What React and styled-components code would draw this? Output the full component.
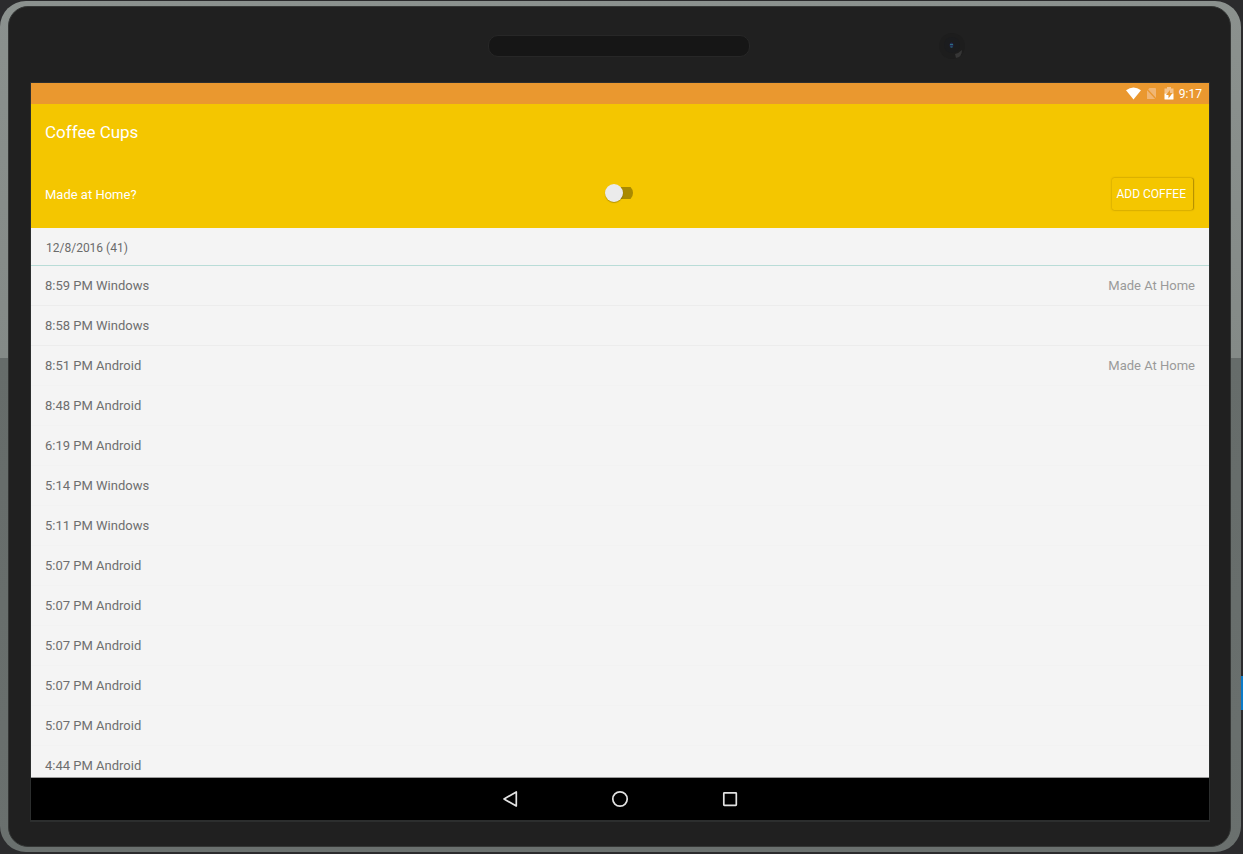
import React from "react";
import styled, { createGlobalStyle } from "styled-components";

const GlobalStyle = createGlobalStyle`
  *, *::before, *::after { box-sizing: border-box; }
  body {
    margin: 0;
    background: #2b2b2d;
    font-family: Roboto, "Liberation Sans", sans-serif;
  }
`;

const Desk = styled.div`
  display: flex;
  height: 100vh;
  padding: 1px 0 2px;
  overflow: hidden;
`;

const Casing = styled.div`
  flex: 1;
  min-width: 0;
  display: flex;
  padding: 5px 10px 5px 8px;
  border-radius: 26px;
  background: linear-gradient(#8b918e 0, #848a87 42%, #666c6a 42%, #6a706e 100%);
`;

const Edge = styled.div`
  flex: none;
  width: 2px;
  display: flex;
  flex-direction: column;
  justify-content: flex-end;
  padding-bottom: 142px;
`;

const EdgeMark = styled.div`
  height: 34px;
  background: #0a7bc9;
`;

const Bezel = styled.div`
  flex: 1;
  min-width: 0;
  display: flex;
  flex-direction: column;
  padding: 0 20px 24px 21px;
  border: 1px solid #343635;
  border-radius: 20px;
  background: #202020;
`;

const BezelTop = styled.div`
  display: grid;
  grid-template-columns: 1fr auto 1fr;
  align-items: center;
  height: 75px;
  padding: 2px 2px 0 0;
`;

const Speaker = styled.div`
  grid-column: 2;
  width: 262px;
  height: 22px;
  border: 1px solid #272727;
  border-radius: 10px;
  background: #161616;
`;

const Camera = styled.svg`
  width: 28px;
  height: 28px;
  margin-left: 188px;
`;

const Screen = styled.main`
  flex: 1;
  min-height: 0;
  display: flex;
  flex-direction: column;
  border: solid #2c2e2e;
  border-width: 1px 1px 2px;
  background: #f4f4f4;
`;

const StatusBar = styled.div`
  flex: none;
  display: flex;
  align-items: center;
  justify-content: flex-end;
  height: 21px;
  padding-right: 7px;
  background: #ea982f;
  color: #fff;
  font-size: 12px;
`;

const StatusIcons = styled.svg`
  width: 48px;
  height: 21px;
  margin-right: 5px;
`;

const AppHeader = styled.header`
  flex: none;
  background: #f4c600;
  color: #fff;
`;

const Title = styled.h1`
  margin: 0;
  padding: 0 14px;
  font-size: 17px;
  line-height: 56px;
  font-weight: 400;
`;

const Controls = styled.div`
  display: grid;
  grid-template-columns: 1fr auto 1fr;
  align-items: center;
  height: 68px;
  padding: 0 16px 0 14px;
`;

const SwitchLabel = styled.label`
  font-size: 13px;
`;

const Switch = styled.input`
  appearance: none;
  display: flex;
  align-items: center;
  width: 28px;
  height: 18px;
  margin: 0 0 2px;
  border-radius: 9px;
  background: linear-gradient(#a98a00, #a98a00) right center / 18px 12px no-repeat;
  &::before {
    content: "";
    width: 18px;
    height: 18px;
    border-radius: 50%;
    background: #ebebeb;
    box-shadow: 0 1px 1px rgba(0, 0, 0, 0.25);
  }
  &:checked { justify-content: flex-end; }
`;

const AddButton = styled.button`
  justify-self: end;
  height: 32px;
  padding: 0 7px 0 4px;
  border: 0;
  border-radius: 2px;
  background: #f4c600;
  box-shadow: 1px 0 1px rgba(110, 85, 0, 0.4), 0 0 2px rgba(110, 85, 0, 0.5);
  color: #fff;
  font-family: inherit;
  font-size: 12px;
  text-transform: uppercase;
`;

const CupLog = styled.section`
  flex: 1;
  min-height: 0;
  overflow: hidden;
  border-bottom: 1px solid #9b9b9b;
`;

const DayHeading = styled.h2`
  margin: 0;
  padding: 3px 15px 0;
  border-bottom: 1px solid #b9dcd7;
  color: #6b6b6b;
  font-size: 12px;
  line-height: 34px;
  font-weight: 400;
`;

const CupList = styled.ul`
  margin: 0;
  padding: 0;
  list-style: none;
`;

const CupRow = styled.li`
  display: flex;
  justify-content: space-between;
  height: 40px;
  padding: 0 14px;
  border-bottom: 1px solid ${({ $faint }) => ($faint ? "#f2f2f2" : "#ececec")};
  color: #6e6e6e;
  font-size: 13px;
  line-height: 40px;
`;

const HomeNote = styled.span`
  color: #9a9a9a;
`;

const NavBar = styled.nav`
  flex: none;
  display: flex;
  align-items: center;
  justify-content: center;
  gap: 86px;
  height: 42px;
  padding-bottom: 1px;
  background: #000;
`;

const NavButton = styled.button`
  display: flex;
  padding: 0;
  border: 0;
  background: none;
  svg { width: 24px; height: 24px; fill: none; stroke: #e2e2e2; stroke-width: 1.7; }
`;

const cups = [
  ["8:59 PM", "Windows", true],
  ["8:58 PM", "Windows"],
  ["8:51 PM", "Android", true],
  ["8:48 PM", "Android"],
  ["6:19 PM", "Android"],
  ["5:14 PM", "Windows"],
  ["5:11 PM", "Windows"],
  ["5:07 PM", "Android"],
  ["5:07 PM", "Android"],
  ["5:07 PM", "Android"],
  ["5:07 PM", "Android"],
  ["5:07 PM", "Android"],
  ["4:44 PM", "Android"],
];

export default function App() {
  return (
    <>
      <GlobalStyle />
      <Desk>
        <Casing>
          <Bezel>
            <BezelTop>
              <Speaker />
              <Camera viewBox="0 0 28 28" aria-hidden="true">
                <circle cx="14" cy="14" r="13" fill="#1d1d1d" />
                <circle cx="14" cy="13" r="8" fill="#1b1c1e" />
                <path d="M17 22 Q21 21 24 18 Q24 25 18 26Z" fill="#363636" />
                <ellipse cx="13.500" cy="13" rx="2" ry="2.500" fill="#232a52" />
                <path d="M12 12.500h3M12.500 15h2" stroke="#2b6f80" />
              </Camera>
            </BezelTop>
            <Screen>
              <StatusBar>
                <StatusIcons viewBox="0 0 48 21" aria-hidden="true">
                  <path d="M0 7.300Q7.500 1.800 15 7.300L7.500 16.500Z" fill="#fff" />
                  <path d="M23.500 5H29q1 0 1 1v9.500q0 .5-.5.500h-8q-.5 0-.5-.5V7.500z" fill="#f0b674" />
                  <path d="M20 5l10.500 11.500" stroke="#ea982f" strokeWidth="1.300" />
                  <path d="M38.500 5.500h2.500V4h4v1.500h2.500v5h-9z" fill="#f4c48e" />
                  <path d="M38.500 10.500h9V16q0 .5-.5.500h-8q-.5 0-.5-.5z" fill="#fff" />
                  <path d="M44 7l-4 5h2.500v3.500l4-5.500H44z" fill="#ea982f" />
                </StatusIcons>
                <time>9:17</time>
              </StatusBar>
              <AppHeader>
                <Title>Coffee Cups</Title>
                <Controls>
                  <SwitchLabel htmlFor="made-at-home">Made at Home?</SwitchLabel>
                  <Switch id="made-at-home" type="checkbox" role="switch" />
                  <AddButton type="button">Add Coffee</AddButton>
                </Controls>
              </AppHeader>
              <CupLog>
                <DayHeading>12/8/2016 (41)</DayHeading>
                <CupList>
                  {cups.map(([time, os, home], i) => (
                    <CupRow key={i} $faint={i > 1}>
                      <span>{time} {os}</span>
                      {home && <HomeNote>Made At Home</HomeNote>}
                    </CupRow>
                  ))}
                </CupList>
              </CupLog>
              <NavBar>
                <NavButton type="button" aria-label="Back">
                  <svg viewBox="0 0 24 24"><path d="M18.300 5v14L6 12z" strokeLinejoin="round" /></svg>
                </NavButton>
                <NavButton type="button" aria-label="Home">
                  <svg viewBox="0 0 24 24"><circle cx="12" cy="12" r="7.200" /></svg>
                </NavButton>
                <NavButton type="button" aria-label="Overview">
                  <svg viewBox="0 0 24 24"><rect x="5.800" y="5.800" width="12.500" height="12.500" rx=".5" /></svg>
                </NavButton>
              </NavBar>
            </Screen>
          </Bezel>
        </Casing>
        <Edge><EdgeMark /></Edge>
      </Desk>
    </>
  );
}
